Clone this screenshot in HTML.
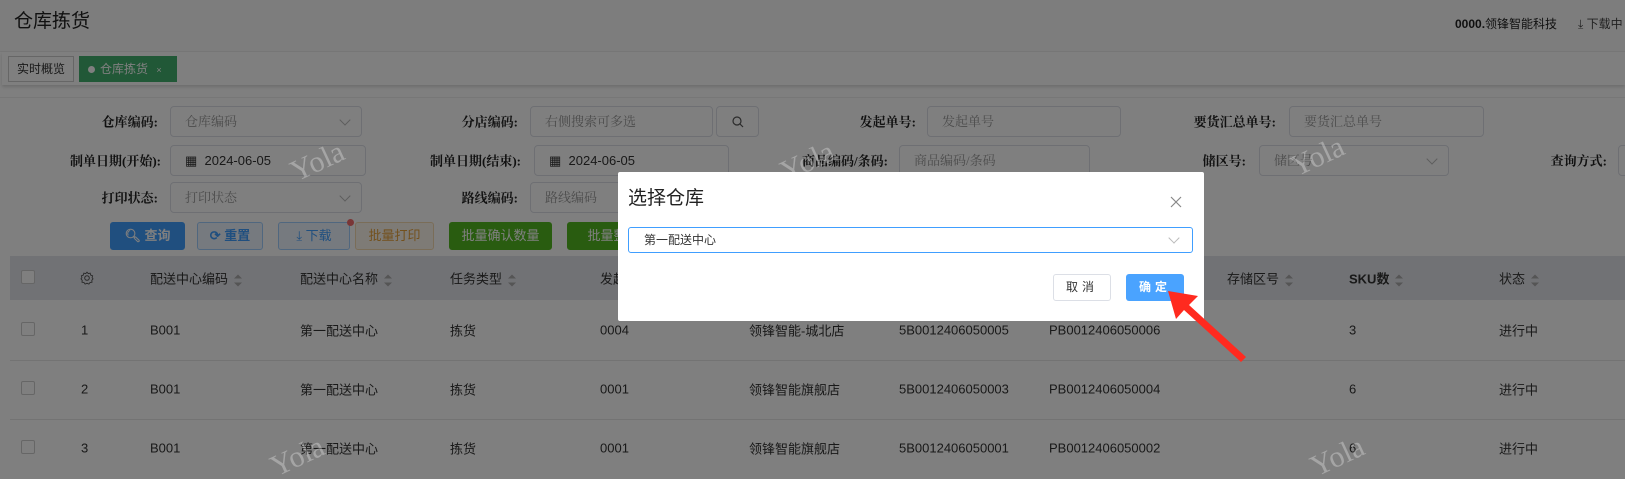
<!DOCTYPE html>
<html><head><meta charset="utf-8"><style>
*{box-sizing:border-box;margin:0;padding:0}
body{width:1625px;height:479px;overflow:hidden;position:relative;background:#fff;font-family:"Liberation Sans","Noto Sans CJK SC",sans-serif;font-size:13px;color:#333}
.a{position:absolute;white-space:nowrap}
.lbl{position:absolute;text-align:right;font-size:13px;color:#222;transform:translateY(-50%);font-family:"Liberation Serif","Noto Serif CJK SC",serif;font-weight:bold}
.inp{position:absolute;height:31px;border:1px solid #dcdfe6;border-radius:4px;background:#fff;color:#999;font-size:13px;line-height:29px;padding-left:14px;font-family:"Liberation Serif","Noto Serif CJK SC",serif}
.inp .ch{position:absolute;right:12px;top:9px;width:8px;height:8px;border-right:1px solid #bbb;border-bottom:1px solid #bbb;transform:rotate(45deg)}
.btn{position:absolute;height:28px;top:222px;border-radius:3px;font-size:13px;line-height:26px;text-align:center;border:1px solid}
.th{position:absolute;top:278px;transform:translateY(-50%);font-size:13px;color:#333}
.srt{display:inline-block;vertical-align:middle;margin-left:6px;width:8px;height:12px;position:relative}
.srt:before{content:"";position:absolute;top:0;left:0;border:4px solid transparent;border-bottom:4px solid #aaa;border-top:0}
.srt:after{content:"";position:absolute;bottom:0;left:0;border:4px solid transparent;border-top:4px solid #aaa;border-bottom:0}
.td{position:absolute;transform:translateY(-50%);font-size:13px;color:#333}
.cb{position:absolute;width:14px;height:14px;border:1px solid #ccc;border-radius:2px;background:#fff}
.wm{position:absolute;font-family:"Liberation Serif",serif;font-size:30px;color:rgba(255,255,255,.3);transform:rotate(-25deg)}
</style></head><body>
<div class="a" style="left:0;top:0;width:1625px;height:52px;background:#fafafa;border-bottom:1px solid #eee"></div>
<div class="a" style="left:14px;top:6px;font-size:19px;color:#222">仓库拣货</div>
<div class="a" style="left:1455px;top:15px;font-size:12px;color:#222"><b>0000.</b>领锋智能科技</div>
<div class="a" style="left:1578px;top:15px;font-size:12px;color:#444">⤓ 下载中</div>
<div class="a" style="left:2px;top:52px;width:1623px;height:33px;background:#fff;box-shadow:0 2px 3px rgba(0,0,0,.15)"></div>
<div class="a" style="left:8px;top:56px;width:66px;height:26px;border:1px solid #ccc;background:#fff;font-size:12px;line-height:24px;text-align:center;color:#333">实时概览</div>
<div class="a" style="left:79px;top:56px;width:98px;height:26px;background:#43b06e;font-size:12px;line-height:26px;color:#fff;padding-left:9px"><span style="display:inline-block;width:7px;height:7px;border-radius:50%;background:#fff;margin-right:5px"></span>仓库拣货 <span style="font-size:9px;margin-left:5px">×</span></div>
<div class="a" style="left:0;top:97px;width:1625px;height:1px;background:#eee"></div>

<div class="lbl" style="right:1467px;top:121px">仓库编码:</div>
<div class="inp" style="left:170px;top:106px;width:192px">仓库编码<span class="ch"></span></div>
<div class="lbl" style="right:1107px;top:121px">分店编码:</div>
<div class="inp" style="left:530px;top:106px;width:183px">右侧搜索可多选</div>
<div class="inp" style="left:716px;top:106px;width:43px;padding:0"><svg style="position:absolute;left:15px;top:9px" width="12" height="12"><circle cx="5" cy="5" r="4" fill="none" stroke="#555" stroke-width="1.2"/><path d="M8 8L11 11" stroke="#555" stroke-width="1.2"/></svg></div>
<div class="lbl" style="right:709px;top:121px">发起单号:</div>
<div class="inp" style="left:927px;top:106px;width:194px">发起单号</div>
<div class="lbl" style="right:349px;top:121px">要货汇总单号:</div>
<div class="inp" style="left:1289px;top:106px;width:195px">要货汇总单号</div>

<div class="lbl" style="right:1464px;top:160px">制单日期(开始):</div>
<div class="inp" style="left:170px;top:145px;width:196px;color:#333;font-family:'Liberation Sans',sans-serif">▦&nbsp; 2024-06-05</div>
<div class="lbl" style="right:1104px;top:160px">制单日期(结束):</div>
<div class="inp" style="left:534px;top:145px;width:195px;color:#333;font-family:'Liberation Sans',sans-serif">▦&nbsp; 2024-06-05</div>
<div class="lbl" style="right:737px;top:160px">商品编码/条码:</div>
<div class="inp" style="left:899px;top:145px;width:191px">商品编码/条码</div>
<div class="lbl" style="right:379px;top:160px">储区号:</div>
<div class="inp" style="left:1259px;top:145px;width:190px">储区号<span class="ch"></span></div>
<div class="lbl" style="right:18px;top:160px">查询方式:</div>
<div class="inp" style="left:1618px;top:145px;width:30px"></div>

<div class="lbl" style="right:1467px;top:197px">打印状态:</div>
<div class="inp" style="left:170px;top:182px;width:192px">打印状态<span class="ch"></span></div>
<div class="lbl" style="right:1107px;top:197px">路线编码:</div>
<div class="inp" style="left:530px;top:182px;width:183px">路线编码</div>

<div class="btn" style="left:110px;width:75px;background:#409eff;border-color:#409eff;color:#fff;font-weight:bold">🔍︎ 查询</div>
<div class="btn" style="left:197px;width:66px;background:#ecf5ff;border-color:#a0cfff;color:#409eff;font-weight:bold">⟳ 重置</div>
<div class="btn" style="left:278px;width:72px;background:#ecf5ff;border-color:#a0cfff;color:#409eff">⤓ 下载</div>
<div class="a" style="left:347px;top:219px;width:7px;height:7px;border-radius:50%;background:#f56c6c"></div>
<div class="btn" style="left:355px;width:79px;background:#fdf6ec;border-color:#f5dab1;color:#e6a23c">批量打印</div>
<div class="btn" style="left:449px;width:103px;background:#52b820;border-color:#52b820;color:#fff">批量确认数量</div>
<div class="btn" style="left:567px;width:80px;background:#52b820;border-color:#52b820;color:#fff">批量整</div>

<div class="a" style="left:10px;top:256px;width:1615px;height:44px;background:#e2e4ea"></div>
<div class="cb" style="left:21px;top:270px"></div>
<svg class="a" style="left:80px;top:271px" width="14" height="14" viewBox="0 0 14 14"><circle cx="7" cy="7" r="2.3" fill="none" stroke="#555"/><path d="M7 1.2L8.3 2.6L10.2 2.2L10.7 4.1L12.6 4.8L12.1 6.7L13 7.9L11.8 9.3L12 11.2L10 11.5L8.9 13.1L7 12.3L5.1 13.1L4 11.5L2 11.2L2.2 9.3L1 7.9L1.9 6.7L1.4 4.8L3.3 4.1L3.8 2.2L5.7 2.6Z" fill="none" stroke="#555" stroke-width="0.9"/></svg>
<div class="th" style="left:150px">配送中心编码<span class="srt"></span></div>
<div class="th" style="left:300px">配送中心名称<span class="srt"></span></div>
<div class="th" style="left:450px">任务类型<span class="srt"></span></div>
<div class="th" style="left:600px">发起</div>
<div class="th" style="left:1227px">存储区号<span class="srt"></span></div>
<div class="th" style="left:1349px;font-weight:bold">SKU数<span class="srt"></span></div>
<div class="th" style="left:1499px">状态<span class="srt"></span></div>
<div class="a" style="left:10px;top:360px;width:1615px;height:1px;background:#e6e6e6"></div>
<div class="a" style="left:10px;top:419px;width:1615px;height:1px;background:#e6e6e6"></div>

<div class="cb" style="left:21px;top:322px"></div>
<div class="td" style="top:330px;left:81px">1</div><div class="td" style="top:330px;left:150px">B001</div><div class="td" style="top:330px;left:300px">第一配送中心</div><div class="td" style="top:330px;left:450px">拣货</div><div class="td" style="top:330px;left:600px">0004</div><div class="td" style="top:330px;left:749px">领锋智能-城北店</div><div class="td" style="top:330px;left:899px">5B0012406050005</div><div class="td" style="top:330px;left:1049px">PB0012406050006</div><div class="td" style="top:330px;left:1349px">3</div><div class="td" style="top:330px;left:1499px">进行中</div>

<div class="cb" style="left:21px;top:381px"></div>
<div class="td" style="top:389px;left:81px">2</div><div class="td" style="top:389px;left:150px">B001</div><div class="td" style="top:389px;left:300px">第一配送中心</div><div class="td" style="top:389px;left:450px">拣货</div><div class="td" style="top:389px;left:600px">0001</div><div class="td" style="top:389px;left:749px">领锋智能旗舰店</div><div class="td" style="top:389px;left:899px">5B0012406050003</div><div class="td" style="top:389px;left:1049px">PB0012406050004</div><div class="td" style="top:389px;left:1349px">6</div><div class="td" style="top:389px;left:1499px">进行中</div>

<div class="cb" style="left:21px;top:440px"></div>
<div class="td" style="top:448px;left:81px">3</div><div class="td" style="top:448px;left:150px">B001</div><div class="td" style="top:448px;left:300px">第一配送中心</div><div class="td" style="top:448px;left:450px">拣货</div><div class="td" style="top:448px;left:600px">0001</div><div class="td" style="top:448px;left:749px">领锋智能旗舰店</div><div class="td" style="top:448px;left:899px">5B0012406050001</div><div class="td" style="top:448px;left:1049px">PB0012406050002</div><div class="td" style="top:448px;left:1349px">6</div><div class="td" style="top:448px;left:1499px">进行中</div>

<div class="a" style="left:0;top:0;width:1625px;height:479px;background:rgba(0,0,0,.5)"></div>
<div class="wm" style="left:290px;top:145px">Yola</div>
<div class="wm" style="left:780px;top:145px">Yola</div>
<div class="wm" style="left:1290px;top:140px">Yola</div>
<div class="wm" style="left:270px;top:440px">Yola</div>
<div class="wm" style="left:1310px;top:440px">Yola</div>

<div class="a" style="left:618px;top:172px;width:586px;height:149px;background:#fff;border-radius:2px"></div>
<div class="a" style="left:628px;top:183px;font-size:19px;color:#222">选择仓库</div>
<svg class="a" style="left:1170px;top:196px" width="12" height="12"><path d="M1 1L11 11M11 1L1 11" stroke="#888" stroke-width="1.2"/></svg>
<div class="a" style="left:628px;top:227px;width:565px;height:26px;border:1px solid #409eff;border-radius:3px;font-size:12px;line-height:24px;padding-left:15px;color:#333">第一配送中心<span style="position:absolute;right:14px;top:6px;width:8px;height:8px;border-right:1px solid #bbb;border-bottom:1px solid #bbb;transform:rotate(45deg)"></span></div>
<div class="a" style="left:1053px;top:274px;width:58px;height:27px;border:1px solid #dcdfe6;border-radius:3px;font-size:12px;line-height:25px;text-align:center;color:#333;letter-spacing:4px">取消</div>
<div class="a" style="left:1126px;top:274px;width:58px;height:27px;background:#4aa3ff;border-radius:3px;font-size:12px;line-height:27px;text-align:center;color:#fff;letter-spacing:4px;font-weight:bold">确定</div>
<svg class="a" style="left:0;top:0" width="1625" height="479"><polygon points="1168,291 1198,296 1189,305 1246,357 1241,362 1184,310 1176,319" fill="#ff2a1f"/></svg>
</body></html>
